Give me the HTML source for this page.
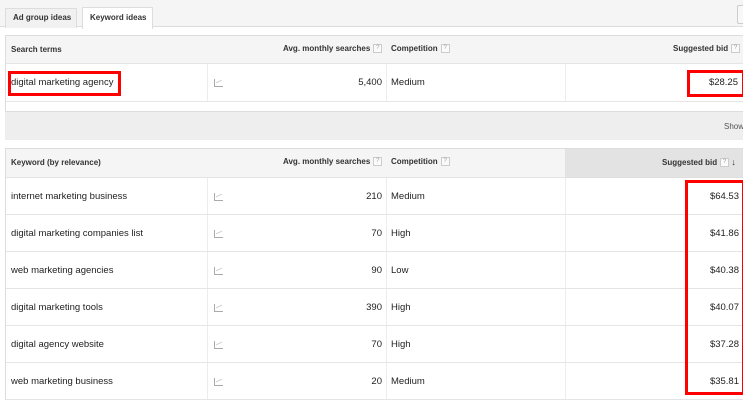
<!DOCTYPE html>
<html><head><style>
*{margin:0;padding:0;box-sizing:border-box}
body{width:743px;height:400px;overflow:hidden;background:#fff;font-family:"Liberation Sans",Arial,sans-serif;position:relative;color:#222}
.a{position:absolute}
.h{font-size:8px;font-weight:bold;color:#333}
.t{font-size:9.5px;color:#222}
.r{position:absolute;text-align:right;font-size:9.5px;color:#222;width:60px}
.q{display:inline-block;width:9px;height:9px;border:1px solid #ccc;font-size:6px;line-height:7px;text-align:center;color:#999;font-weight:normal;vertical-align:middle;margin-left:3px;background:#fafafa}
.hl{position:absolute;height:1px;background:#e5e5e5}
.vl{position:absolute;width:1px;background:#ececec}
.red{position:absolute;border:3px solid #f00}
.ic{position:absolute;width:9px;height:8px;border-left:1px solid #aaa;border-bottom:1px solid #aaa}
.ic:after{content:"";position:absolute;left:1px;top:2px;width:6px;height:3px;border-top:1px solid #ccc;transform:skewY(-25deg)}
</style></head><body>
<div class="a" style="left:0;top:0;width:743px;height:27px;background:#f5f5f5;border-bottom:1px solid #ddd"></div>
<div class="a" style="left:5px;top:8px;width:72px;height:20px;background:#f1f1f1;border:1px solid #ddd;border-bottom:none"></div>
<div class="a h" style="left:13px;top:13px">Ad group ideas</div>
<div class="a" style="left:82px;top:7px;width:71px;height:22px;background:#fff;border:1px solid #ddd;border-bottom:none"></div>
<div class="a h" style="left:90px;top:13px">Keyword ideas</div>
<div class="a" style="left:737px;top:5px;width:10px;height:19px;border:1px solid #ccc;border-radius:2px;background:#f8f8f8"></div>

<div class="a" style="left:5px;top:35px;width:738px;height:77px;border:1px solid #ddd;border-right:none"></div>
<div class="a" style="left:6px;top:36px;width:737px;height:28px;background:#f5f5f5;border-bottom:1px solid #e5e5e5"></div>
<div class="a h" style="left:11px;top:45px">Search terms</div>
<div class="a h" style="left:283px;top:44px">Avg. monthly searches<span class="q">?</span></div>
<div class="a h" style="left:391px;top:44px">Competition<span class="q">?</span></div>
<div class="a h" style="left:673px;top:44px">Suggested bid<span class="q">?</span></div>
<div class="vl" style="left:207px;top:64px;height:37px"></div>
<div class="vl" style="left:386px;top:64px;height:37px"></div>
<div class="vl" style="left:565px;top:64px;height:37px"></div>
<div class="hl" style="left:6px;top:101px;width:737px"></div>
<div class="a t" style="left:11px;top:77px">digital marketing agency</div>
<div class="ic" style="left:214px;top:79px"></div>
<div class="r" style="left:322px;top:77px">5,400</div>
<div class="a t" style="left:391px;top:77px">Medium</div>
<div class="r" style="left:678px;top:77px">$28.25</div>
<div class="red" style="left:8px;top:71px;width:113px;height:25px"></div>
<div class="red" style="left:687px;top:70px;width:58px;height:27px"></div>

<div class="a" style="left:5px;top:112px;width:738px;height:28px;background:#eee"></div>
<div class="a" style="left:724px;top:122px;font-size:8px;color:#555">Show</div>

<div class="a" style="left:5px;top:148px;width:738px;height:252px;border:1px solid #ddd;border-right:none"></div>
<div class="a" style="left:6px;top:149px;width:737px;height:29px;background:#f5f5f5;border-bottom:1px solid #e5e5e5"></div>
<div class="a" style="left:565px;top:149px;width:178px;height:29px;background:#e3e3e3;border-bottom:1px solid #e0e0e0"></div>
<div class="a h" style="left:11px;top:158px">Keyword (by relevance)</div>
<div class="a h" style="left:283px;top:157px">Avg. monthly searches<span class="q">?</span></div>
<div class="a h" style="left:391px;top:157px">Competition<span class="q">?</span></div>
<div class="a h" style="left:662px;top:157px">Suggested bid<span class="q">?</span> <span style="font-size:9px">&#8595;</span></div>
<div class="vl" style="left:207px;top:178px;height:222px"></div>
<div class="vl" style="left:386px;top:178px;height:222px"></div>
<div class="vl" style="left:565px;top:178px;height:222px"></div>

<div class="hl" style="left:6px;top:214px;width:737px"></div>
<div class="hl" style="left:6px;top:251px;width:737px"></div>
<div class="hl" style="left:6px;top:288px;width:737px"></div>
<div class="hl" style="left:6px;top:325px;width:737px"></div>
<div class="hl" style="left:6px;top:362px;width:737px"></div>
<div class="hl" style="left:6px;top:399px;width:737px"></div>

<div class="a t" style="left:11px;top:191px">internet marketing business</div><div class="ic" style="left:214px;top:193px"></div><div class="r" style="left:322px;top:191px">210</div><div class="a t" style="left:391px;top:191px">Medium</div><div class="r" style="left:679px;top:191px">$64.53</div>
<div class="a t" style="left:11px;top:228px">digital marketing companies list</div><div class="ic" style="left:214px;top:230px"></div><div class="r" style="left:322px;top:228px">70</div><div class="a t" style="left:391px;top:228px">High</div><div class="r" style="left:679px;top:228px">$41.86</div>
<div class="a t" style="left:11px;top:265px">web marketing agencies</div><div class="ic" style="left:214px;top:267px"></div><div class="r" style="left:322px;top:265px">90</div><div class="a t" style="left:391px;top:265px">Low</div><div class="r" style="left:679px;top:265px">$40.38</div>
<div class="a t" style="left:11px;top:302px">digital marketing tools</div><div class="ic" style="left:214px;top:304px"></div><div class="r" style="left:322px;top:302px">390</div><div class="a t" style="left:391px;top:302px">High</div><div class="r" style="left:679px;top:302px">$40.07</div>
<div class="a t" style="left:11px;top:339px">digital agency website</div><div class="ic" style="left:214px;top:341px"></div><div class="r" style="left:322px;top:339px">70</div><div class="a t" style="left:391px;top:339px">High</div><div class="r" style="left:679px;top:339px">$37.28</div>
<div class="a t" style="left:11px;top:376px">web marketing business</div><div class="ic" style="left:214px;top:378px"></div><div class="r" style="left:322px;top:376px">20</div><div class="a t" style="left:391px;top:376px">Medium</div><div class="r" style="left:679px;top:376px">$35.81</div>

<div class="red" style="left:685px;top:180px;width:60px;height:215px"></div>
</body></html>
